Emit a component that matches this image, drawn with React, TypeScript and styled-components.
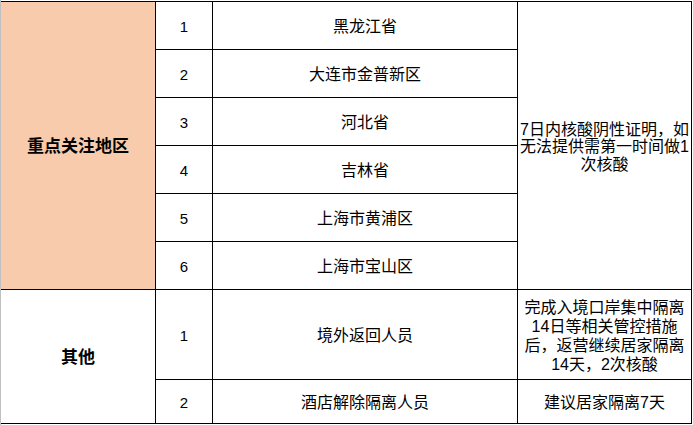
import React from "react";
import styled, { createGlobalStyle } from "styled-components";

const Global = createGlobalStyle`
  html, body { margin: 0; padding: 0; background: #fff; }
  body { font-family: "Liberation Sans", "Noto Sans CJK SC", sans-serif; color: #000; }
`;

const Page = styled.div`
  width: 692px;
  height: 425px;
  border-left: 1px solid #c0c0c0;
  padding-top: 1px;
  box-sizing: border-box;
`;

const Grid = styled.div`
  display: grid;
  grid-template-columns: 154px 56px 304px 173px;
  grid-template-rows: repeat(6, 47px) 89px 43px;
  gap: 1px;
  padding: 1px 1px 1px 0;
  background: #000;
  width: max-content;
`;

const Cell = styled.div<{ $bg?: string; $rows?: number; $bold?: boolean; $size?: number; $lh?: number }>`
  background: ${(p) => p.$bg ?? "#fff"};
  grid-row: ${(p) => (p.$rows ? `span ${p.$rows}` : "auto")};
  display: flex;
  align-items: center;
  justify-content: center;
  text-align: center;
  font-size: ${(p) => p.$size ?? 16}px;
  font-weight: ${(p) => (p.$bold ? 700 : 400)};
  line-height: ${(p) => p.$lh ?? 18}px;
  padding-top: 3px;
  box-sizing: border-box;
`;

const Lines = styled.div`
  display: flex;
  flex-direction: column;
  align-items: center;
  white-space: nowrap;
`;

const regions = ["黑龙江省", "大连市金普新区", "河北省", "吉林省", "上海市黄浦区", "上海市宝山区"];

export default function App() {
  return (
    <>
      <Global />
      <Page>
        <Grid>
          {regions.map((r, i) => (
            <React.Fragment key={r}>
              {i === 0 && (
                <Cell $bg="#f8cbad" $rows={6} $bold $size={17}>
                  重点关注地区
                </Cell>
              )}
              <Cell $size={15}>{i + 1}</Cell>
              <Cell>{r}</Cell>
              {i === 0 && (
                <Cell $rows={6} $lh={17.5}>
                  <Lines>
                    <span>7日内核酸阴性证明，如</span>
                    <span>无法提供需第一时间做1</span>
                    <span>次核酸</span>
                  </Lines>
                </Cell>
              )}
            </React.Fragment>
          ))}
          <Cell $rows={2} $bold $size={17}>
            其他
          </Cell>
          <Cell $size={15}>1</Cell>
          <Cell>境外返回人员</Cell>
          <Cell $lh={19}>
            <Lines>
              <span>完成入境口岸集中隔离</span>
              <span>14日等相关管控措施</span>
              <span>后，返营继续居家隔离</span>
              <span>14天，2次核酸</span>
            </Lines>
          </Cell>
          <Cell $size={15}>2</Cell>
          <Cell>酒店解除隔离人员</Cell>
          <Cell>建议居家隔离7天</Cell>
        </Grid>
      </Page>
    </>
  );
}
